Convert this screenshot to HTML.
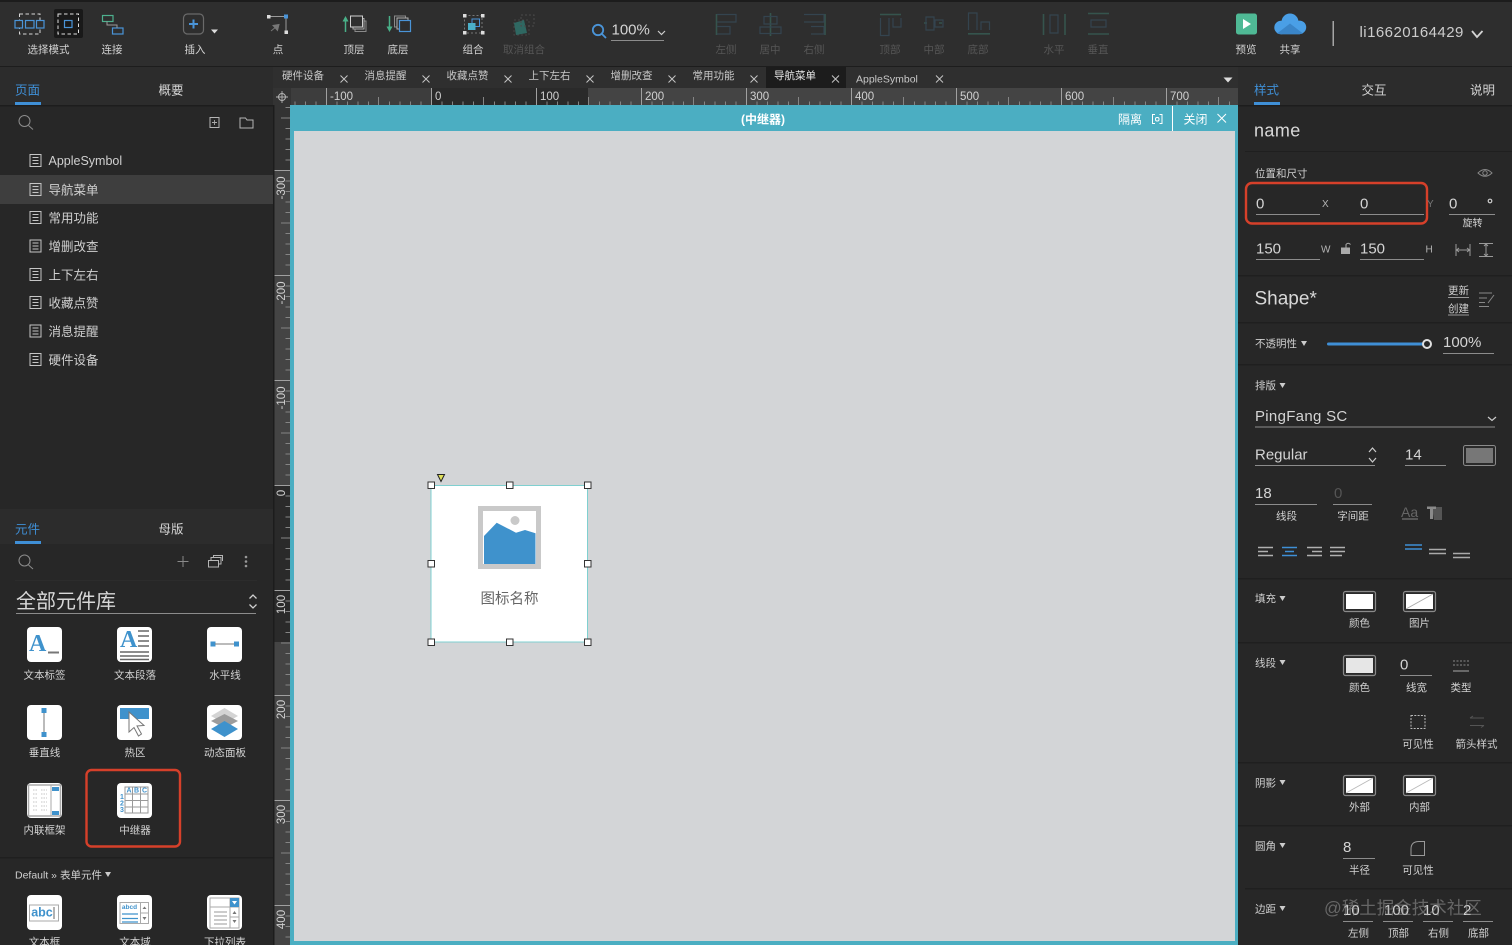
<!DOCTYPE html>
<html lang="zh"><head><meta charset="utf-8"><title>Axure</title>
<style>
html,body{margin:0;padding:0;background:#272727;width:1512px;height:945px;overflow:hidden}
svg{display:block;position:absolute;left:0;top:0}
text{font-family:"Liberation Sans","Noto Sans CJK SC",sans-serif;dominant-baseline:central;fill:#d0d0d0}
.l{font-size:10.5px;text-anchor:middle;fill:#d2d2d2;transform:translateY(.7px)}
.d{font-size:10.5px;text-anchor:middle;fill:#565656;transform:translateY(.7px)}
.tab{font-size:10.5px;fill:#c8c8c8;transform:translateY(.7px)}
.x{stroke:#c4c4c4;stroke-width:1;fill:none}
.h{font-size:12.5px;fill:#d4d4d4;text-anchor:middle;transform:translateY(.7px)}
.bt{font-size:12.500px;fill:#3f8fd6;transform:translateY(.7px)}
.page{font-size:12.500px;fill:#d0d0d0;transform:translateY(.3px)}
.s{font-size:10.5px;fill:#d0d0d0;transform:translateY(.7px)}
.r{font-size:11.500px;fill:#d0d0d0}
.v{font-size:15px;fill:#d4d4d4}
.u{stroke:#8c8c8c;stroke-width:1;fill:none}
.sep{fill:#1f1f1f}
.sw{fill:#2a2a2a;stroke:#8a8a8a;stroke-width:1.2}
.ic{fill:none;stroke:#b5b5b5;stroke-width:1}
.dm1{fill:none;stroke:#35544d;stroke-width:1.6}
.dm2{fill:none;stroke:#34444f;stroke-width:1.2}
</style></head><body>
<svg width="1512" height="945" viewBox="0 0 1512 945" xmlns="http://www.w3.org/2000/svg">
<defs>
<pattern id="hr" patternUnits="userSpaceOnUse" x="326" y="88" width="105" height="17">
<path d="M.5 0V17" stroke="#a0a0a0" fill="none"/>
<path d="M11 13.500V17M21.500 13.500V17M32 13.500V17M42.500 13.500V17M52.500 9V17M63.500 13.500V17M74 13.500V17M84.500 13.500V17M95 13.500V17" stroke="#858585" fill="none"/>
</pattern>
<pattern id="vr" patternUnits="userSpaceOnUse" x="274" y="170" width="16" height="105">
<path d="M0 .5H16" stroke="#a0a0a0" fill="none"/>
<path d="M11.500 11H16M11.500 21.500H16M11.500 32H16M11.500 42.500H16M7 53H16M11.500 63.500H16M11.500 74H16M11.500 84.500H16M11.500 95H16" stroke="#858585" fill="none"/>
</pattern>
</defs>

<!-- base -->
<rect width="1512" height="945" fill="#272727"/>
<rect width="1512" height="67" fill="#2e2e2e"/>
<rect width="1512" height="2" fill="#1c1c1c"/>
<rect y="66" width="1512" height="1.500" fill="#1d1d1d"/>

<!-- toolbar: select mode -->
<rect x="19.500" y="14" width="20.500" height="20" fill="none" stroke="#d8d8d8" stroke-dasharray="3.500 2.500"/>
<g fill="#2e2e2e" stroke="#4a94d8" stroke-width="1.200"><rect x="15" y="20.500" width="7.500" height="7.500"/><rect x="25.500" y="20.500" width="8.500" height="7.500"/><rect x="36.500" y="20.500" width="7.500" height="7.500"/></g>
<rect x="54" y="9" width="29" height="29" rx="2" fill="#191919"/>
<rect x="58" y="14" width="20.500" height="20" fill="none" stroke="#e0e0e0" stroke-dasharray="3.500 2.500"/>
<rect x="64.500" y="20.500" width="7.500" height="7" fill="none" stroke="#4a94d8" stroke-width="1.200"/>
<!-- connect -->
<rect x="102.500" y="15.500" width="10.500" height="6" fill="none" stroke="#4eb08e" stroke-width="1.200"/>
<rect x="112.500" y="28" width="10.500" height="6" fill="none" stroke="#4a94d8" stroke-width="1.200"/>
<path d="M107 21.500V25H117V28" fill="none" stroke="#9a9a9a"/>
<!-- insert -->
<rect x="183.500" y="14" width="20" height="20" rx="4" fill="none" stroke="#6a6a6a" stroke-width="1.200"/>
<path d="M193.500 19.500V28.500M189 24H198" stroke="#4a94d8" stroke-width="2"/>
<path d="M211 29.500H218L214.500 33.500Z" fill="#ddd"/>
<!-- point -->
<path d="M269 16.500H286V32" fill="none" stroke="#9a9a9a"/>
<rect x="267" y="15" width="3.500" height="3.500" fill="#ddd"/><rect x="284" y="14.500" width="4" height="4" fill="#4a94d8"/><rect x="284.500" y="30.500" width="3.500" height="3.500" fill="#ddd"/>
<path d="M279 24.500L271 31M279 24.500L273 25.500L277.500 30.500Z" fill="#777" stroke="#777"/>
<!-- top/bottom -->
<path d="M345.500 32V18" stroke="#49b088" stroke-width="1.500"/><path d="M342.500 21.500L345.500 16L348.500 21.500Z" fill="#49b088"/>
<rect x="355" y="21" width="11" height="10.500" fill="none" stroke="#8a8a8a"/><rect x="353" y="18.500" width="11" height="10.500" fill="#2e2e2e" stroke="#a8a8a8"/><rect x="350.500" y="16" width="12" height="11" fill="#2e2e2e" stroke="#d0d0d0"/>
<path d="M389.500 16V30" stroke="#49b088" stroke-width="1.500"/><path d="M386.500 26.500L389.500 32L392.500 26.500Z" fill="#49b088"/>
<rect x="394.500" y="16" width="11" height="11" fill="none" stroke="#8a8a8a"/><rect x="397" y="18" width="11" height="11" fill="#2e2e2e" stroke="#b0b0b0"/><rect x="399.500" y="20.500" width="11" height="11" fill="#2e2e2e" stroke="#4a94d8" stroke-width="1.200"/>
<!-- group -->
<rect x="464.500" y="15.500" width="17.500" height="17.500" fill="none" stroke="#777" stroke-dasharray="2 2"/>
<g fill="#ddd"><rect x="463" y="14" width="3.500" height="3.500"/><rect x="481" y="14" width="3.500" height="3.500"/><rect x="463" y="31" width="3.500" height="3.500"/><rect x="481" y="31" width="3.500" height="3.500"/></g>
<rect x="472" y="19" width="7.500" height="7.500" fill="none" stroke="#4a94d8"/><rect x="468" y="23" width="7.500" height="7" fill="#4bb0c8"/>
<!-- ungroup -->
<rect x="514" y="20" width="15" height="15" fill="none" stroke="#444" stroke-dasharray="2 2"/>
<path d="M514 23L524 20L527 33L516 35Z" fill="#2f6862"/>
<rect x="521" y="15" width="13" height="11" fill="none" stroke="#4a4a4a" stroke-dasharray="2 2"/>

<!-- zoom -->
<circle cx="598" cy="30" r="5.200" fill="none" stroke="#4a94d8" stroke-width="1.800"/><path d="M602 34L606 38" stroke="#4a94d8" stroke-width="1.800"/>
<text x="611.500" y="30" style="font-size:15px;fill:#d4d4d4">100%</text>
<path d="M611 40.500H664" class="u"/>
<path d="M658 31L661.500 34.500L665 31" fill="none" stroke="#ccc" stroke-width="1.200"/>

<!-- alignment icons (disabled) -->
<path class="dm1" d="M716.500 14V35"/><path class="dm2" d="M717 14.500H736V22H717M717 26.500H730V34H717"/>
<path class="dm1" d="M770.500 13V36"/><path class="dm2" d="M764 16.500H777V24H764ZM760 27H781V33.500H760Z"/>
<path class="dm1" d="M825 14V35"/><path class="dm2" d="M804 14.500H824V22H804M811 26.500H824V34H811"/>
<path class="dm1" d="M880 14.500H901"/><path class="dm2" d="M880.500 18V35.500H889V18M893 18V27H901V18"/>
<path class="dm1" d="M924 23H945" stroke-dasharray="3 12"/><path class="dm2" d="M926 17H934V30H926ZM935 20H943V27H935Z"/>
<path class="dm1" d="M968 33.800H990"/><path class="dm2" d="M968.500 30V13H977V30M981 30V22H989.500V30"/>
<path class="dm1" d="M1043.500 14V35M1065 14V35"/><path class="dm2" d="M1050 15H1058V33H1050Z"/>
<path class="dm1" d="M1088 13.500H1109M1088 34H1109"/><path class="dm2" d="M1091 20H1106V27H1091Z"/>

<!-- toolbar labels -->
<text class="l" x="48.500" y="49.500">选择模式</text>
<text class="l" x="112" y="49.500">连接</text>
<text class="l" x="195" y="49.500">插入</text>
<text class="l" x="278" y="49.500">点</text>
<text class="l" x="354" y="49.500">顶层</text>
<text class="l" x="398" y="49.500">底层</text>
<text class="l" x="473" y="49.500">组合</text>
<text class="d" x="524" y="49.500">取消组合</text>
<text class="d" x="726" y="49.500">左侧</text>
<text class="d" x="770" y="49.500">居中</text>
<text class="d" x="814" y="49.500">右侧</text>
<text class="d" x="890" y="49.500">顶部</text>
<text class="d" x="934" y="49.500">中部</text>
<text class="d" x="978" y="49.500">底部</text>
<text class="d" x="1054" y="49.500">水平</text>
<text class="d" x="1098" y="49.500">垂直</text>

<!-- preview/share -->
<rect x="1236" y="13.500" width="21" height="21" rx="2.500" fill="#4fb995"/>
<path d="M1243 19L1251 24L1243 29Z" fill="#fff"/>
<g fill="#4a9fe6"><circle cx="1290" cy="22" r="8.500"/><circle cx="1281" cy="27.500" r="6.700"/><circle cx="1299.500" cy="27.300" r="6.700"/><rect x="1281" y="26" width="19" height="8.200"/></g>
<path d="M1277 33.500L1290 23.500L1303 33.500Q1301 34.200 1299 34.200H1281Q1279 34.200 1277 33.500Z" fill="#3a85c8"/>
<text class="l" x="1246" y="49.500">预览</text>
<text class="l" x="1290" y="49.500">共享</text>
<rect x="1332.500" y="21" width="1.500" height="25" fill="#a5a5a5"/>
<text x="1359.500" y="32.500" style="font-size:15px;letter-spacing:.45px;fill:#cdcdcd">li16620164429</text>
<path d="M1472 31L1477 37L1482.500 31" fill="none" stroke="#d4d4d4" stroke-width="1.800"/>

<!-- left panel: pages -->
<rect x="0" y="67" width="273" height="38" fill="#2c2c2c"/>
<rect x="0" y="105" width="273" height="1.500" fill="#1d1d1d"/>
<text class="bt" x="15" y="90">页面</text>
<rect x="15" y="102" width="26" height="3" fill="#3f8fd6"/>
<text class="h" x="171" y="90">概要</text>
<circle cx="24.500" cy="121" r="5.500" fill="none" stroke="#8c8c8c"/><path d="M28.500 125.500L33 129.500" stroke="#8c8c8c"/>
<rect x="210" y="117.500" width="9" height="10" class="ic" stroke="#9a9a9a"/><path d="M214.500 120V125M212 122.500H217" stroke="#aaa" stroke-width=".9"/>
<path d="M240 118H245.500L247 120H253V128H240Z" class="ic"/>
<rect x="0" y="175" width="273" height="29" fill="#3e3e3e"/>
<g fill="none" stroke="#c5c5c5" stroke-width="1">
<g id="pg"><rect x="30" y="154.500" width="11" height="12"/><path d="M32.500 157.500H38.500M32.500 160.500H38.500M32.500 163.500H38.500"/></g>
<use href="#pg" y="29"/><use href="#pg" y="57"/><use href="#pg" y="85.500"/><use href="#pg" y="114"/><use href="#pg" y="142"/><use href="#pg" y="170.500"/><use href="#pg" y="199"/>
</g>
<text class="page" x="48.500" y="160.500">AppleSymbol</text>
<text class="page" x="48.500" y="190">导航菜单</text>
<text class="page" x="48.500" y="218">常用功能</text>
<text class="page" x="48.500" y="246.500">增删改查</text>
<text class="page" x="48.500" y="275">上下左右</text>
<text class="page" x="48.500" y="303">收藏点赞</text>
<text class="page" x="48.500" y="331.500">消息提醒</text>
<text class="page" x="48.500" y="360">硬件设备</text>

<!-- left panel: widgets -->
<rect x="0" y="509" width="273" height="35" fill="#2c2c2c"/>
<text class="bt" x="15" y="529">元件</text>
<rect x="15" y="541" width="26" height="3" fill="#3f8fd6"/>
<text class="h" x="171" y="529">母版</text>
<circle cx="24.500" cy="560.500" r="5.500" fill="none" stroke="#8c8c8c"/><path d="M28.500 565L33 569" stroke="#8c8c8c"/>
<path d="M183 556V567M177.500 561.500H188.500" stroke="#8a8a8a"/>
<path d="M208.500 560.500H218.500V567H208.500ZM211 560.500V557.500H221V564H218.500M213.500 557.500V555.500H222.500V561" class="ic" stroke-width=".9"/>
<g fill="#999"><circle cx="246" cy="557" r="1.300"/><circle cx="246" cy="561.500" r="1.300"/><circle cx="246" cy="566" r="1.300"/></g>
<rect x="15" y="580" width="242" height="1" fill="#2c2c2c"/>
<text x="16" y="602" style="font-size:20px;fill:#d8d8d8">全部元件库</text>
<rect x="16" y="613" width="240" height="1" fill="#8c8c8c"/>
<path d="M249.500 598.500L253 595L256.500 598.500M249.500 604.500L253 608L256.500 604.500" fill="none" stroke="#d0d0d0" stroke-width="1.300"/>

<!-- widget icons -->
<g fill="#fff">
<rect x="27" y="627" width="35" height="35" rx="4"/><rect x="117" y="627" width="35" height="35" rx="4"/><rect x="207" y="627" width="35" height="35" rx="4"/>
<rect x="27" y="705" width="35" height="35" rx="4"/><rect x="117" y="705" width="35" height="35" rx="4"/><rect x="207" y="705" width="35" height="35" rx="4"/>
<rect x="27" y="783" width="35" height="35" rx="4"/><rect x="117" y="783" width="35" height="35" rx="4"/>
<rect x="27" y="895" width="35" height="35" rx="4"/><rect x="117" y="895" width="35" height="35" rx="4"/><rect x="207" y="895" width="35" height="35" rx="4"/>
</g>
<text x="29" y="644" style="font-family:'Liberation Serif',serif;font-size:24px;font-weight:bold;fill:#3f92cc">A</text>
<rect x="48" y="651.500" width="11" height="2" fill="#777"/>
<text x="120" y="640" style="font-family:'Liberation Serif',serif;font-size:24px;font-weight:bold;fill:#3f92cc">A</text>
<path d="M138 631H149M138 636H149M138 641H149M138 646H149M120 652H149M120 656H149M120 659.500H149" stroke="#666" stroke-width="1.500"/>
<rect x="210.500" y="641.500" width="5" height="5" fill="#3f92cc"/><rect x="234" y="641.500" width="5" height="5" fill="#3f92cc"/><path d="M215 644H234" stroke="#777"/>
<rect x="41.500" y="708" width="5" height="5" fill="#3f92cc"/><rect x="41.500" y="732" width="5" height="5" fill="#3f92cc"/><path d="M44 713V732" stroke="#777"/>
<rect x="120" y="708" width="29" height="11" fill="#3f92cc"/>
<path d="M129 712V732L134 727.500L138.500 736L141.500 734L137 726L144 725.500Z" fill="#fff" stroke="#777"/>
<path d="M224.500 708L238 716L224.500 723.500L211 716Z" fill="#d4d4d4"/><path d="M224.500 714L238 721L224.500 728L211 721Z" fill="#9c9c9c"/><path d="M224.500 721L238 729L224.500 737L211 729Z" fill="#3f92cc"/>
<rect x="28.500" y="785" width="32" height="31" fill="#fff" stroke="#aaa" stroke-width="1.500"/><path d="M51 785V816" stroke="#aaa"/>
<path d="M33 790H38M41 790H47M33 794H38M41 794H47M33 798H38M41 798H47M33 802H38M41 802H47M33 806H38M41 806H47M33 810H38M41 810H47" stroke="#c4c4c4" stroke-dasharray="1.500 1"/>
<rect x="52" y="787" width="7" height="4" fill="#3f92cc"/><rect x="52" y="811" width="7" height="4" fill="#3f92cc"/>
<path d="M125 787H148V813H125ZM125 794H148M125 800.500H148M125 807H148M132.500 787V813M140.500 787V813" fill="none" stroke="#999"/>
<text x="129" y="791" style="font-size:7px;font-weight:bold;fill:#3f92cc;text-anchor:middle">A</text>
<text x="136.500" y="791" style="font-size:7px;font-weight:bold;fill:#3f92cc;text-anchor:middle">B</text>
<text x="144.500" y="791" style="font-size:7px;font-weight:bold;fill:#3f92cc;text-anchor:middle">C</text>
<text x="122" y="797.500" style="font-size:7px;font-weight:bold;fill:#3f92cc;text-anchor:middle">1</text>
<text x="122" y="804" style="font-size:7px;font-weight:bold;fill:#3f92cc;text-anchor:middle">2</text>
<text x="122" y="810.500" style="font-size:7px;font-weight:bold;fill:#3f92cc;text-anchor:middle">3</text>
<rect x="29.500" y="905" width="29" height="16" fill="none" stroke="#aaa"/>
<text x="42" y="912.500" style="font-size:12.500px;font-weight:bold;fill:#3f92cc;text-anchor:middle">abc</text>
<path d="M54 907V919" stroke="#666"/>
<rect x="120" y="902.500" width="28.500" height="21" fill="none" stroke="#aaa"/><path d="M140.500 902.500V923.500M140.500 913H148.500" stroke="#aaa"/>
<text x="129.500" y="907.500" style="font-size:6.500px;font-weight:bold;fill:#3f92cc;text-anchor:middle">abcd</text>
<path d="M122 914H138M122 918.500H138M122 922H138" stroke="#3f92cc" stroke-width="1.200"/>
<path d="M142.500 909L144.500 906.500L146.500 909ZM142.500 917L144.500 920L146.500 917Z" fill="#777"/>
<rect x="210" y="898" width="29" height="30" fill="none" stroke="#aaa"/><path d="M210 907H239M230 898V928M230 917H239" stroke="#aaa"/>
<rect x="230" y="898" width="9" height="9" fill="#3f92cc"/><path d="M232 901H237L234.500 904.500Z" fill="#fff"/>
<path d="M214 912H227M214 916H227M214 920H227M214 924H227" stroke="#999"/>
<path d="M232.500 914L234.500 911L236.500 914ZM232.500 920L234.500 923L236.500 920Z" fill="#777"/>

<text class="l" x="44.500" y="675">文本标签</text>
<text class="l" x="135" y="675">文本段落</text>
<text class="l" x="225" y="675">水平线</text>
<text class="l" x="44.500" y="752.500">垂直线</text>
<text class="l" x="135" y="752.500">热区</text>
<text class="l" x="225" y="752.500">动态面板</text>
<text class="l" x="44.500" y="830">内联框架</text>
<text class="l" x="135" y="830">中继器</text>
<rect x="86.500" y="770" width="93.500" height="76.500" rx="5" fill="none" stroke="#d6402a" stroke-width="2.400"/>
<rect x="0" y="857" width="273" height="1.500" fill="#1f1f1f"/>
<text class="s" x="15" y="875">Default » 表单元件</text>
<path d="M105 872H111L108 877Z" fill="#ccc"/>
<text class="l" x="44.500" y="942">文本框</text>
<text class="l" x="135" y="942">文本域</text>
<text class="l" x="225" y="942">下拉列表</text>

<!-- tabs -->
<rect x="273" y="67" width="965" height="21" fill="#2f2f2f"/>
<rect x="766" y="67" width="80" height="21" fill="#1c1c1c"/>
<text class="tab" x="282" y="75.500">硬件设备</text><path class="x" d="M340.500 75.500L347.500 82.500M347.500 75.500L340.500 82.500"/>
<text class="tab" x="364.500" y="75.500">消息提醒</text><path class="x" d="M422.500 75.500L429.500 82.500M429.500 75.500L422.500 82.500"/>
<text class="tab" x="446.500" y="75.500">收藏点赞</text><path class="x" d="M504.500 75.500L511.500 82.500M511.500 75.500L504.500 82.500"/>
<text class="tab" x="528.500" y="75.500">上下左右</text><path class="x" d="M586.500 75.500L593.500 82.500M593.500 75.500L586.500 82.500"/>
<text class="tab" x="610.500" y="75.500">增删改查</text><path class="x" d="M668.500 75.500L675.500 82.500M675.500 75.500L668.500 82.500"/>
<text class="tab" x="692.500" y="75.500">常用功能</text><path class="x" d="M750.500 75.500L757.500 82.500M757.500 75.500L750.500 82.500"/>
<text class="tab" x="774" y="75.500" style="fill:#e8e8e8">导航菜单</text><path class="x" d="M832 75.500L839 82.500M839 75.500L832 82.500"/>
<text class="tab" x="856" y="79">AppleSymbol</text><path class="x" d="M936 75.500L943 82.500M943 75.500L936 82.500"/>
<path d="M1223.500 77.500H1232.500L1228 82.500Z" fill="#ddd"/>

<!-- rulers -->
<rect x="273" y="88" width="965" height="17" fill="#444"/>
<rect x="291" y="88" width="140" height="17" fill="#3d3d3d"/>
<rect x="431" y="88" width="157" height="17" fill="#2a2a2a"/>
<rect x="273" y="88" width="18" height="17" fill="#333"/>
<rect x="291" y="88" width="947" height="17" fill="url(#hr)"/>
<rect x="274" y="105" width="16" height="840" fill="#444"/>
<rect x="274" y="105" width="16" height="65" fill="#333"/>
<rect x="274" y="485" width="16" height="157" fill="#2a2a2a"/>
<rect x="274" y="105" width="16" height="840" fill="url(#vr)"/>
<rect x="273" y="105" width="1.500" height="840" fill="#1c1c1c"/>
<circle cx="282" cy="97" r="3.500" fill="none" stroke="#b5b5b5"/><path d="M282 91V103M276 97H288" stroke="#b5b5b5" stroke-width=".9"/>
<g>
<text class="r" x="330" y="97">-100</text><text class="r" x="435" y="97">0</text><text class="r" x="540" y="97">100</text><text class="r" x="645" y="97">200</text><text class="r" x="750" y="97">300</text><text class="r" x="855" y="97">400</text><text class="r" x="960" y="97">500</text><text class="r" x="1065" y="97">600</text><text class="r" x="1170" y="97">700</text>
<text class="r" text-anchor="middle" x="282" y="188" transform="rotate(-90 282 188)">-300</text>
<text class="r" text-anchor="middle" x="282" y="293" transform="rotate(-90 282 293)">-200</text>
<text class="r" text-anchor="middle" x="282" y="398" transform="rotate(-90 282 398)">-100</text>
<text class="r" text-anchor="middle" x="282" y="493" transform="rotate(-90 282 493)">0</text>
<text class="r" text-anchor="middle" x="282" y="604.500" transform="rotate(-90 282 604.500)">100</text>
<text class="r" text-anchor="middle" x="282" y="709.500" transform="rotate(-90 282 709.500)">200</text>
<text class="r" text-anchor="middle" x="282" y="814.500" transform="rotate(-90 282 814.500)">300</text>
<text class="r" text-anchor="middle" x="282" y="919.500" transform="rotate(-90 282 919.500)">400</text>
</g>

<!-- canvas -->
<rect x="290" y="105" width="948" height="840" fill="#4baec2"/>
<rect x="294" y="131" width="941" height="810" fill="#d3d5d7"/>
<text x="763" y="119.500" style="font-size:12px;font-weight:bold;fill:#fff;text-anchor:middle">(中继器)</text>
<text x="1118" y="119.500" style="font-size:12px;fill:#fff">隔离</text>
<path d="M1155 114.500H1152.500V123.500H1155M1159.500 114.500H1162V123.500H1159.500" fill="none" stroke="#fff"/><rect x="1155.500" y="117.500" width="3.500" height="3.500" rx="1.500" fill="none" stroke="#fff"/>
<rect x="1172" y="106" width="1" height="25" fill="#fff"/>
<text x="1183.500" y="119.500" style="font-size:12px;fill:#fff">关闭</text>
<path d="M1217.500 114L1226 122.500M1226 114L1217.500 122.500" stroke="#fff" stroke-width="1"/>

<!-- widget -->
<rect x="431" y="485.500" width="156.500" height="156.500" fill="#fff" stroke="#7fd0d0"/>
<rect x="480.500" y="508.500" width="58" height="58" fill="#fff" stroke="#c9c9c9" stroke-width="5"/>
<path d="M484 536L496.700 522.700L516 532.700L525 530L535.500 533.300V564H484Z" fill="#3f92cc"/>
<circle cx="515" cy="520.500" r="4.500" fill="#c9c9c9"/>
<text x="509.500" y="599.500" style="font-size:14.500px;fill:#666;text-anchor:middle">图标名称</text>
<g fill="#fff" stroke="#333" stroke-width="1">
<rect x="428" y="482" width="6.500" height="6.500"/><rect x="506.500" y="482" width="6.500" height="6.500"/><rect x="584.500" y="482" width="6.500" height="6.500"/>
<rect x="428" y="560.500" width="6.500" height="6.500"/><rect x="584.500" y="560.500" width="6.500" height="6.500"/>
<rect x="428" y="639" width="6.500" height="6.500"/><rect x="506.500" y="639" width="6.500" height="6.500"/><rect x="584.500" y="639" width="6.500" height="6.500"/>
</g>
<path d="M437.500 474.500H444.500L441 481.500Z" fill="#dfe05a" stroke="#222"/>

<!-- right panel -->
<rect x="1238" y="67" width="274" height="38" fill="#2c2c2c"/>
<rect x="1238" y="105" width="274" height="1.500" fill="#1d1d1d"/>
<text class="bt" x="1254" y="90">样式</text>
<rect x="1254" y="102" width="26" height="3" fill="#3f8fd6"/>
<text class="h" x="1374" y="90">交互</text>
<text class="h" x="1482.500" y="90">说明</text>
<text x="1254" y="130.500" style="font-size:18px;fill:#d8d8d8;letter-spacing:.4px">name</text>
<rect x="1245" y="151" width="267" height="1" fill="#1f1f1f"/>
<text x="1255" y="173.500" class="s">位置和尺寸</text>
<path d="M1478 173Q1485 166 1492 173Q1485 179.500 1478 173Z" class="ic" style="stroke:#888"/><circle cx="1485" cy="173" r="2.200" class="ic" style="stroke:#888"/>
<rect x="1246" y="183" width="181" height="40.500" rx="6" fill="none" stroke="#d6402a" stroke-width="2.400"/>
<text class="v" x="1256" y="204">0</text><path class="u" d="M1256 214.500H1320"/>
<text x="1322" y="204.500" style="font-size:10px;fill:#b5b5b5">X</text>
<text class="v" x="1360" y="204">0</text><path class="u" d="M1360 214.500H1424"/>
<text x="1427" y="204.500" style="font-size:10px;fill:#777">Y</text>
<text class="v" x="1449" y="204">0</text><path class="u" d="M1449 214.500H1495"/>
<circle cx="1490" cy="201" r="1.800" fill="none" stroke="#ccc" stroke-width="1.200"/>
<text class="l" x="1472.500" y="223.500" style="font-size:10px">旋转</text>
<text class="v" x="1256" y="249">150</text><path class="u" d="M1256 259.500H1320"/>
<text x="1321" y="250" style="font-size:10px;fill:#b5b5b5">W</text>
<rect x="1341" y="247.500" width="9" height="6.500" fill="#aaa"/><path d="M1346 247.500V244.500Q1348 242 1350.500 244.500" fill="none" stroke="#aaa"/>
<text class="v" x="1360" y="249">150</text><path class="u" d="M1360 259.500H1424"/>
<text x="1425.500" y="250" style="font-size:10px;fill:#b5b5b5">H</text>
<path d="M1456 244V256M1470 244V256M1456 250H1470M1459 248L1456.500 250L1459 252M1467 248L1469.500 250L1467 252" class="ic" style="stroke:#999"/>
<path d="M1479 243.500H1493M1479 256.500H1493M1486 243.500V256.500M1484 246L1486 244L1488 246M1484 254L1486 256L1488 254" class="ic" style="stroke:#999"/>
<rect class="sep" x="1238" y="275" width="274" height="1.500"/>
<text x="1254.500" y="299" style="font-size:19px;fill:#d8d8d8">Shape*</text>
<text class="s" x="1448" y="290.500">更新</text><path d="M1448 297.500H1469" stroke="#999"/>
<text class="s" x="1448" y="308.500">创建</text><path d="M1448 315H1469" stroke="#999"/>
<path d="M1479 293H1492M1479 298H1487M1479 302.500H1485M1479 306.500H1489M1488 303L1494 295" class="ic" style="stroke:#888"/>
<rect class="sep" x="1238" y="322" width="274" height="1.500"/>
<text x="1255" y="343.500" class="s">不透明性</text><path d="M1301 341H1307L1304 346Z" fill="#ccc"/>
<rect x="1327" y="342.500" width="97" height="3" rx="1.500" fill="#3f8fd6"/>
<circle cx="1427" cy="344" r="4" fill="#272727" stroke="#e0e0e0" stroke-width="2"/>
<text class="v" x="1443" y="342.500">100%</text><path class="u" d="M1443 353.500H1494"/>
<rect class="sep" x="1238" y="364" width="274" height="1.500"/>
<text x="1255" y="385.500" class="s">排版</text><path d="M1279.500 383H1285.500L1282.500 388Z" fill="#ccc"/>
<text class="v" x="1255" y="416.500" style="letter-spacing:.3px">PingFang SC</text>
<path class="u" d="M1255 427H1495"/><path d="M1488 417L1492 420.500L1496 417" fill="none" stroke="#ccc" stroke-width="1.200"/>
<text class="v" x="1255" y="455">Regular</text><path class="u" d="M1255 465.500H1375"/>
<path d="M1369 452L1372.500 448L1376 452M1369 458L1372.500 462L1376 458" fill="none" stroke="#ccc" stroke-width="1.200"/>
<text class="v" x="1405" y="455">14</text><path class="u" d="M1405 465.500H1446"/>
<rect x="1463.500" y="445.500" width="32" height="20" rx="2" fill="#2a2a2a" stroke="#8a8a8a"/><rect x="1466" y="448" width="27" height="15" fill="#777"/>
<text class="v" x="1255" y="493.500">18</text><path class="u" d="M1255 504.500H1317"/>
<text class="v" x="1334" y="493.500" style="fill:#555">0</text><path class="u" d="M1333 504.500H1372"/>
<text class="l" x="1286.500" y="516">线段</text><text class="l" x="1353" y="516">字间距</text>
<text x="1401" y="512" style="font-size:14px;fill:#666">Aa</text><path d="M1402 519H1418" stroke="#666" stroke-width="1.500"/>
<path d="M1432 507H1442V520H1434Z" fill="#555"/><path d="M1427 506.500H1436V509H1433V519H1430V509H1427Z" fill="#8a8a8a"/>
<path d="M1258 547.500H1273M1258 551.500H1268M1258 555.500H1273" stroke="#b0b0b0" stroke-width="1.400"/>
<path d="M1282 547.500H1297M1285 551.500H1294M1282 555.500H1297" stroke="#3f8fd6" stroke-width="1.500"/>
<path d="M1307 547.500H1322M1312 551.500H1322M1307 555.500H1322" stroke="#b0b0b0" stroke-width="1.400"/>
<path d="M1330 547.500H1345M1330 551.500H1345M1330 555.500H1342" stroke="#b0b0b0" stroke-width="1.400"/>
<path d="M1405 545H1422M1405 549H1422" stroke="#3f8fd6" stroke-width="1.600"/>
<path d="M1429 549.500H1446M1429 553.500H1446" stroke="#aaa" stroke-width="1.400"/>
<path d="M1453 553.500H1470M1453 557.500H1470" stroke="#aaa" stroke-width="1.400"/>
<rect class="sep" x="1238" y="578" width="274" height="1.500"/>
<text x="1255" y="598.500" class="s">填充</text><path d="M1279.500 596H1285.500L1282.500 601Z" fill="#ccc"/>
<rect class="sw" x="1343.500" y="591.500" width="32" height="20" rx="2"/><rect x="1346" y="594" width="27" height="15" fill="#fff"/>
<rect class="sw" x="1403.500" y="591.500" width="32" height="20" rx="2"/><rect x="1406" y="594" width="27" height="15" fill="#fff"/><path d="M1406 609L1433 594" stroke="#aaa"/>
<text class="l" x="1359.500" y="623">颜色</text><text class="l" x="1419.500" y="623">图片</text>
<rect class="sep" x="1238" y="642" width="274" height="1.500"/>
<text x="1255" y="663" class="s">线段</text><path d="M1279.500 660H1285.500L1282.500 665Z" fill="#ccc"/>
<rect class="sw" x="1343.500" y="655.500" width="32" height="20" rx="2"/><rect x="1346" y="658" width="27" height="15" fill="#e6e6e6"/>
<text class="v" x="1400" y="665">0</text><path class="u" d="M1400 675.500H1432"/>
<path d="M1453 661H1469M1453 665H1469" stroke="#8a8a8a" stroke-dasharray="2 1.500"/><path d="M1453 671H1469" stroke="#aaa"/>
<text class="l" x="1359.500" y="687.500">颜色</text><text class="l" x="1416.500" y="687.500">线宽</text><text class="l" x="1461" y="687.500">类型</text>
<rect x="1411" y="715.500" width="14" height="13" fill="none" stroke="#bbb" stroke-dasharray="2 1.300"/>
<path d="M1470 718H1484M1470 718L1473 716M1470 725.500H1484M1484 725.500L1481 727.500" stroke="#555" fill="none"/>
<text class="l" x="1418" y="744">可见性</text><text class="l" x="1476.500" y="744">箭头样式</text>
<rect class="sep" x="1238" y="762" width="274" height="1.500"/>
<text x="1255" y="783" class="s">阴影</text><path d="M1279.500 780H1285.500L1282.500 785Z" fill="#ccc"/>
<rect class="sw" x="1343.500" y="775.500" width="32" height="20" rx="2"/><rect x="1346" y="778" width="27" height="15" fill="#fff"/><path d="M1346 793L1373 778" stroke="#bbb"/>
<rect class="sw" x="1403.500" y="775.500" width="32" height="20" rx="2"/><rect x="1406" y="778" width="27" height="15" fill="#fff"/><path d="M1406 793L1433 778" stroke="#bbb"/>
<text class="l" x="1359.500" y="807">外部</text><text class="l" x="1419.500" y="807">内部</text>
<rect class="sep" x="1238" y="825" width="274" height="1.500"/>
<text x="1255" y="846" class="s">圆角</text><path d="M1279.500 843H1285.500L1282.500 848Z" fill="#ccc"/>
<text class="v" x="1343" y="847.500">8</text><path class="u" d="M1343 858.500H1375"/>
<path d="M1411 855.500V849Q1411 841.500 1419 841.500H1424.500V855.500Z" fill="none" stroke="#999"/>
<text class="l" x="1359.500" y="870">半径</text><text class="l" x="1418" y="870">可见性</text>
<rect class="sep" x="1245" y="888" width="267" height="1.500"/>
<text x="1255" y="909" class="s">边距</text><path d="M1279.500 906H1285.500L1282.500 911Z" fill="#ccc"/>
<text class="v" x="1343" y="910.500">10</text><path class="u" d="M1343 921.500H1373"/>
<text class="v" x="1384" y="910.500">100</text><path class="u" d="M1383 921.500H1413"/>
<text class="v" x="1423" y="910.500">10</text><path class="u" d="M1423 921.500H1453"/>
<text class="v" x="1463" y="910.500">2</text><path class="u" d="M1463 921.500H1493"/>
<text class="l" x="1358.500" y="933">左侧</text><text class="l" x="1398.500" y="933">顶部</text><text class="l" x="1438.500" y="933">右侧</text><text class="l" x="1478.500" y="933">底部</text>
<text x="1324" y="908" style="font-size:17.500px;fill:#9a9a9a;fill-opacity:.55">@稀土掘金技术社区</text>
</svg>
</body></html>
